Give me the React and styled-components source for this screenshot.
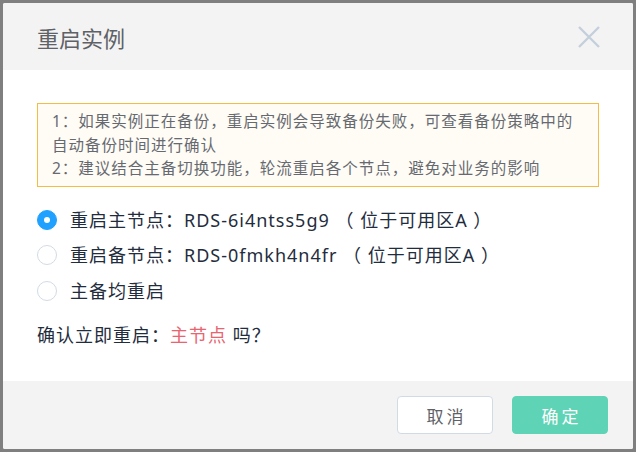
import React, { useState } from 'react'
import styled, { createGlobalStyle } from 'styled-components'

const GlobalStyle = createGlobalStyle`
  html, body {
    margin: 0;
    padding: 0;
    background: #7f7f7f;
  }
  body {
    font-family: "Noto Sans", "Noto Sans CJK SC", sans-serif;
  }
`

const Backdrop = styled.div`
  width: 636px;
  height: 452px;
  box-sizing: border-box;
  padding: 3px;
  background: #7f7f7f;
  display: flex;
`

const Dialog = styled.div`
  width: 630px;
  height: 446px;
  display: flex;
  flex-direction: column;
  background: #fff;
  border-radius: 2px;
  overflow: hidden;
`

const Header = styled.div`
  height: 67px;
  flex: none;
  display: flex;
  align-items: center;
  justify-content: space-between;
  padding: 0 32px 0 34px;
  background: #f3f3f3;
`

const Title = styled.h2`
  margin: 0;
  font-size: 22px;
  font-weight: 400;
  color: #5e6166;
`

const CloseBtn = styled.button`
  border: none;
  background: transparent;
  padding: 0;
  width: 24px;
  height: 24px;
  cursor: pointer;
  display: flex;
`

const Body = styled.div`
  flex: 1;
  padding: 33px 34px 0 34px;
  color: #1f2d3d;
`

const Notice = styled.div`
  border: 1px solid #f4bb45;
  background: #fffcf6;
  padding: 6px 14px 5px 14px;
  font-size: 15.5px;
  line-height: 23.5px;
  letter-spacing: 1px;
  color: #666a70;
`

const Options = styled.div`
  display: flex;
  flex-direction: column;
  gap: 15.5px;
  margin-top: 23px;
`

const Option = styled.label`
  display: flex;
  align-items: center;
  gap: 13px;
  height: 20px;
  font-size: 18px;
  letter-spacing: 1px;
  line-height: 20px;
  cursor: pointer;
  white-space: pre;
`

const Radio = styled.span`
  width: 20px;
  height: 20px;
  box-sizing: border-box;
  border-radius: 50%;
  flex: none;
  border: 1px solid ${({ $checked }) => ($checked ? '#20a0ff' : '#d1dbe5')};
  background: ${({ $checked }) => ($checked ? '#20a0ff' : '#fff')};
  display: flex;
  align-items: center;
  justify-content: center;
  &::after {
    content: '';
    width: 6px;
    height: 6px;
    border-radius: 50%;
    background: #fff;
    display: ${({ $checked }) => ($checked ? 'block' : 'none')};
  }
`

const Confirm = styled.p`
  margin: 24px 0 0 0;
  height: 20px;
  font-size: 18px;
  line-height: 20px;
  letter-spacing: 1px;
`

const Highlight = styled.span`
  color: #ea6470;
`

const Footer = styled.div`
  height: 68px;
  flex: none;
  background: #f3f3f3;
  display: flex;
  align-items: center;
  justify-content: flex-end;
  gap: 19px;
  padding: 0 25px 0 0;
`

const Button = styled.button`
  width: 96px;
  height: 38px;
  border-radius: 4px;
  font-family: inherit;
  font-size: 17px;
  letter-spacing: 3px;
  padding: 0 0 0 3px;
  cursor: pointer;
  border: 1px solid ${({ $primary }) => ($primary ? '#5fd3b5' : '#d1dbe5')};
  background: ${({ $primary }) => ($primary ? '#5fd3b5' : '#fff')};
  color: ${({ $primary }) => ($primary ? '#fff' : '#5e6166')};
`

const options = [
  { key: 'master', text: '重启主节点：RDS-6i4ntss5g9 （ 位于可用区A ）' },
  { key: 'slave', text: '重启备节点：RDS-0fmkh4n4fr （ 位于可用区A ）' },
  { key: 'both', text: '主备均重启' },
]

const labels = { master: '主节点', slave: '备节点', both: '主备节点' }

export default function App() {
  const [value, setValue] = useState('master')

  return (
    <>
      <GlobalStyle />
      <Backdrop>
        <Dialog>
          <Header>
            <Title>重启实例</Title>
            <CloseBtn aria-label="关闭">
              <svg width="24" height="24" viewBox="0 0 24 24">
                <path d="M2 2 L22 22 M22 2 L2 22" stroke="#c4cfdc" strokeWidth="2.4" fill="none" />
              </svg>
            </CloseBtn>
          </Header>
          <Body>
            <Notice>
              1：如果实例正在备份，重启实例会导致备份失败，可查看备份策略中的自动备份时间进行确认
              <br />
              2：建议结合主备切换功能，轮流重启各个节点，避免对业务的影响
            </Notice>
            <Options>
              {options.map((o) => (
                <Option key={o.key} onClick={() => setValue(o.key)}>
                  <Radio $checked={value === o.key} />
                  <span>{o.text}</span>
                </Option>
              ))}
            </Options>
            <Confirm>
              确认立即重启：<Highlight>{labels[value]}</Highlight> 吗？
            </Confirm>
          </Body>
          <Footer>
            <Button>取消</Button>
            <Button $primary>确定</Button>
          </Footer>
        </Dialog>
      </Backdrop>
    </>
  )
}
